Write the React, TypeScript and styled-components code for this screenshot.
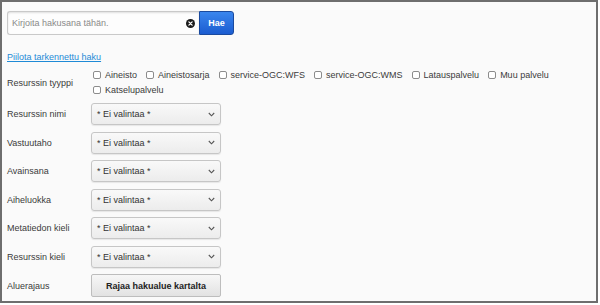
import React from "react";
import styled, { createGlobalStyle } from "styled-components";

const Global = createGlobalStyle`
  html, body { margin: 0; padding: 0; background: #ffffff; }
  body { font-family: "Liberation Sans", Arial, sans-serif; }
  * { box-sizing: border-box; }
`;

const Frame = styled.div`
  width: 598px;
  height: 303px;
  border: 2px solid #6e6e6e;
  background: #fafafa;
  padding: 9px 5px 0 5px;
  display: flex;
  flex-direction: column;
  font-size: 9px;
  color: #3a3a3a;
`;

const SearchRow = styled.div`
  display: flex;
  height: 24px;
`;

const InputBox = styled.div`
  width: 192px;
  height: 24px;
  display: flex;
  align-items: center;
  border: 1px solid #c9c9c9;
  border-right: none;
  border-radius: 3px 0 0 3px;
  background: #fdfdfd;
  box-shadow: inset 0 1px 2px rgba(0, 0, 0, 0.12);
  padding: 0 4px 0 4px;
`;

const Input = styled.input`
  flex: 1;
  min-width: 0;
  border: none;
  outline: none;
  background: transparent;
  font-family: "Liberation Sans", Arial, sans-serif;
  font-size: 9px;
  color: #333;
  padding: 0;
  &::placeholder { color: #8a8a8a; }
`;

const ClearIcon = styled.svg`
  width: 9px;
  height: 9px;
  flex: none;
  margin-left: 2px;
`;

const SearchButton = styled.button`
  width: 35px;
  height: 24px;
  border: 1px solid #1a4a9e;
  border-radius: 0 3px 3px 0;
  background: linear-gradient(#3a86ee, #1b5cd0);
  color: #ffffff;
  font-family: "Liberation Sans", Arial, sans-serif;
  font-weight: bold;
  font-size: 9px;
  padding: 0;
  cursor: pointer;
`;

const ToggleLink = styled.a`
  margin-top: 16px;
  line-height: 12px;
  height: 12px;
  color: #1f8ad6;
  text-decoration: underline;
  align-self: flex-start;
  cursor: pointer;
`;

const Form = styled.div`
  display: flex;
  flex-direction: column;
  gap: 6.5px;
`;

const TypeRow = styled.div`
  display: flex;
  align-items: center;
  margin-top: 4.5px;
  margin-bottom: -1px;
`;

const Row = styled.div`
  display: flex;
  align-items: center;
`;

const Label = styled.div`
  width: 84px;
  flex: none;
  color: #3a3a3a;
`;

const CheckGroup = styled.div`
  display: flex;
  flex-wrap: wrap;
  width: 500px;
  column-gap: 9px;
  margin-left: 2px;
`;

const CheckItem = styled.label`
  display: flex;
  align-items: center;
  height: 15px;
  gap: 4px;
  white-space: nowrap;
`;

const Box = styled.span`
  width: 8px;
  height: 8px;
  border: 1px solid #8c8c8c;
  border-radius: 2px;
  background: #ffffff;
  display: inline-block;
`;

const SelectBox = styled.div`
  width: 130px;
  height: 22px;
  border: 1px solid #c6c6c6;
  border-radius: 3px;
  background: linear-gradient(#f9f9f9, #ececec);
  box-shadow: 0 1px 1px rgba(0, 0, 0, 0.08);
  display: flex;
  align-items: center;
  justify-content: space-between;
  padding: 0 5px 0 5px;
  color: #333;
`;

const Chevron = styled.svg`
  width: 7px;
  height: 5px;
`;

const MapButton = styled.button`
  width: 130px;
  height: 23px;
  border: 1px solid #bdbdbd;
  border-radius: 2px;
  background: linear-gradient(#f7f7f7, #e2e2e2);
  font-family: "Liberation Sans", Arial, sans-serif;
  font-weight: bold;
  font-size: 9px;
  color: #222;
  padding: 0;
  cursor: pointer;
`;

const types = [
  "Aineisto",
  "Aineistosarja",
  "service-OGC:WFS",
  "service-OGC:WMS",
  "Latauspalvelu",
  "Muu palvelu",
  "Katselupalvelu",
];

const selects = [
  "Resurssin nimi",
  "Vastuutaho",
  "Avainsana",
  "Aiheluokka",
  "Metatiedon kieli",
  "Resurssin kieli",
];

export default function App() {
  return (
    <>
      <Global />
      <Frame>
        <SearchRow>
          <InputBox>
            <Input placeholder="Kirjoita hakusana tähän." />
            <ClearIcon viewBox="0 0 10 10">
              <circle cx="5" cy="5" r="5" fill="#1a1a1a" />
              <path d="M3.2 3.2 L6.8 6.8 M6.8 3.2 L3.2 6.8" stroke="#fff" strokeWidth="1.4" strokeLinecap="round" />
            </ClearIcon>
          </InputBox>
          <SearchButton>Hae</SearchButton>
        </SearchRow>
        <ToggleLink>Piilota tarkennettu haku</ToggleLink>
        <Form>
          <TypeRow>
            <Label>Resurssin tyyppi</Label>
            <CheckGroup>
              {types.map((t) => (
                <CheckItem key={t}>
                  <Box />
                  {t}
                </CheckItem>
              ))}
            </CheckGroup>
          </TypeRow>
          {selects.map((s) => (
            <Row key={s}>
              <Label>{s}</Label>
              <SelectBox>
                <span>* Ei valintaa *</span>
                <Chevron viewBox="0 0 7 5">
                  <path d="M0.8 1 L3.5 3.8 L6.2 1" fill="none" stroke="#555" strokeWidth="1.1" />
                </Chevron>
              </SelectBox>
            </Row>
          ))}
          <Row>
            <Label>Aluerajaus</Label>
            <MapButton>Rajaa hakualue kartalta</MapButton>
          </Row>
        </Form>
      </Frame>
    </>
  );
}
